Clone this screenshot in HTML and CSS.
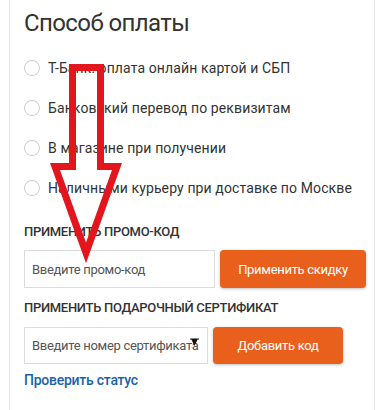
FILE: index.html
```html
<!DOCTYPE html>
<html lang="ru">
<head>
<meta charset="utf-8">
<title>Способ оплаты</title>
<link rel="stylesheet" href="styles.css">
</head>
<body>
<div class="card">
  <h2 class="title">Способ оплаты</h2>
  <ul class="methods">
    <li class="method"><span class="radio"></span><span>Т-Банк: оплата онлайн картой и СБП</span></li>
    <li class="method"><span class="radio"></span><span>Банковский перевод по реквизитам</span></li>
    <li class="method"><span class="radio"></span><span>В магазине при получении</span></li>
    <li class="method"><span class="radio"></span><span>Наличными курьеру при доставке по Москве</span></li>
  </ul>
  <div class="label label-promo">Применить промо-код</div>
  <div class="row">
    <div class="field field-promo"><span class="placeholder">Введите промо-код</span></div>
    <button class="btn btn-promo">Применить скидку</button>
  </div>
  <div class="label label-cert">Применить подарочный сертификат</div>
  <div class="row">
    <div class="field field-cert">
      <span class="placeholder">Введите номер сертификата</span>
      <svg class="marker" width="9" height="8" viewBox="0 0 9 8"><path d="M0 0.5H9V1.5H7.6L4.5 8L1.4 1.5H0Z" fill="#111"/></svg>
    </div>
    <button class="btn btn-cert">Добавить код</button>
  </div>
  <a class="status" href="#">Проверить статус</a>
</div>
<svg class="arrow" width="380" height="410" viewBox="0 0 380 410">
  <path d="M72.5 67.5H100.5V166.5H117L86 253L55 166.5H72.5Z" fill="none" stroke="#e3161e" stroke-width="7" stroke-linejoin="miter" stroke-miterlimit="10"/>
</svg>
</body>
</html>
```

FILE: styles.css
```css
html, body {
  margin: 0;
  padding: 0;
  background: #fff;
}
body {
  width: 380px;
  height: 410px;
  overflow: hidden;
  position: relative;
  font-family: Roboto, "Liberation Sans", Arial, sans-serif;
  color: #333;
}
.card {
  margin-left: 9px;
  width: 366px;
  box-sizing: border-box;
  height: 430px;
  border-left: 1px solid #e8e8e8;
  border-right: 1px solid #e8e8e8;
  padding: 8px 0 0 14px;
}
.title {
  margin: 0;
  font-size: 24px;
  line-height: 30px;
  font-weight: 400;
  letter-spacing: -0.6px;
  color: #333;
}
.methods {
  list-style: none;
  margin: 10px 0 0;
  padding: 0;
}
.method {
  height: 40px;
  display: flex;
  align-items: center;
  gap: 8px;
  font-size: 14px;
  letter-spacing: 0.12px;
  color: #333;
}
.radio {
  width: 16px;
  height: 16px;
  box-sizing: border-box;
  border: 1px solid #cfcfcf;
  border-radius: 50%;
  flex: none;
}
.label {
  font-size: 13px;
  line-height: 16px;
  font-weight: 500;
  letter-spacing: -0.3px;
  text-transform: uppercase;
  color: #333;
}
.label-promo {
  margin-top: 16px;
}
.label-cert {
  margin-top: 12px;
}
.row {
  display: flex;
  gap: 5px;
  margin-top: 10px;
}
.label-cert + .row {
  margin-top: 11px;
}
.field {
  position: relative;
  box-sizing: border-box;
  border: 1px solid #dcdcdc;
  display: flex;
  align-items: center;
  padding-left: 7px;
  overflow: hidden;
  white-space: nowrap;
}
.placeholder {
  font-size: 13px;
  letter-spacing: -0.3px;
  color: #555;
}
.field-promo {
  width: 191px;
  height: 38px;
}
.field-cert {
  width: 184px;
  height: 37px;
}
.marker {
  position: absolute;
  left: 165px;
  top: 10px;
}
.btn {
  border: none;
  border-radius: 4px;
  background: #e8601c;
  color: #fff;
  font-family: inherit;
  font-size: 13px;
  letter-spacing: -0.3px;
  padding: 0;
  box-shadow: 0 1px 3px rgba(0, 0, 0, 0.25);
}
.btn-promo {
  width: 146px;
  height: 38px;
}
.btn-cert {
  width: 130px;
  height: 37px;
}
.status {
  display: block;
  margin-top: 8px;
  font-size: 14px;
  line-height: 16px;
  font-weight: 500;
  letter-spacing: -0.25px;
  color: #1a63a8;
  text-decoration: none;
}
.arrow {
  position: absolute;
  left: 0;
  top: 0;
  pointer-events: none;
}
```
